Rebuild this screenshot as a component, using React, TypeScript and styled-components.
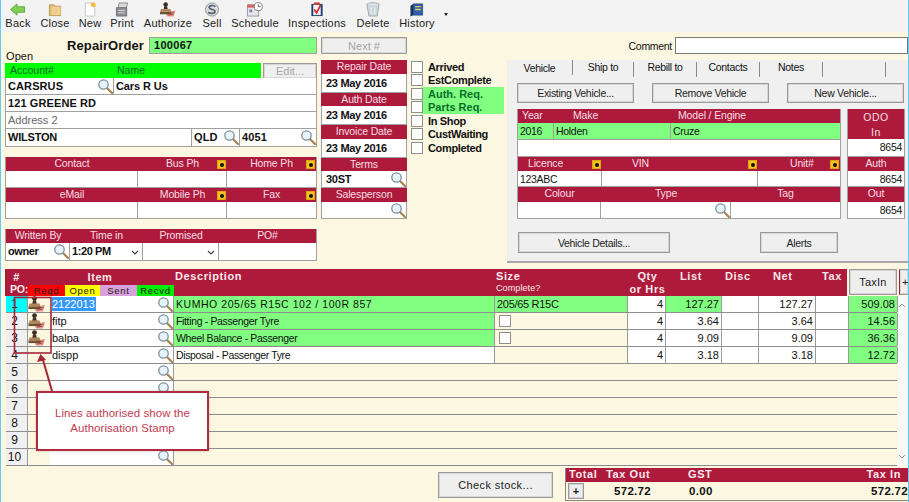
import React from 'react';
import styled, { createGlobalStyle } from 'styled-components';

const CRIMSON = '#ae1a3c';
const GREEN = '#80ff80';
const CREAM = '#fbf7e1';
const LINE = '#a0a0a0';
const UI = '"Liberation Sans", Arial, sans-serif';

const Global = createGlobalStyle`
  html, body { margin: 0; padding: 0; width: 909px; height: 502px; overflow: hidden; background: ${CREAM}; }
  * { box-sizing: border-box; }
`;

const Page = styled.div`
  position: relative; width: 909px; height: 502px; overflow: hidden;
  display: flex; flex-direction: column;
  background: ${CREAM}; border-left: 1px solid #5fcdf0; border-right: 1px solid #5fcdf0;
  font: 11px ${UI}; color: #111;
`;

/* ---------- toolbar ---------- */
const Toolbar = styled.div`display: flex; height: 32px; background: #f3f3f3; flex: none;`;
const ToolItem = styled.div<{ $w: number }>`
  width: ${p => p.$w}px; display: flex; flex-direction: column; align-items: center;
  padding-top: 2px; color: #222; letter-spacing: .2px; line-height: 13px;
  svg { display: block; height: 15px; width: 18px; }
`;
const Caret = styled.div`
  margin: 13px 0 0 5px; width: 0; height: 0;
  border-left: 2.5px solid transparent; border-right: 2.5px solid transparent; border-top: 3px solid #222;
`;

/* ---------- top form ---------- */
const Top = styled.div`
  display: grid; grid-template-columns: 312px 90px 100px 401px; padding: 5px 0 0 4px; height: 231px; flex: none;
`;
const Col = styled.div<{ $ml?: number }>`display: flex; flex-direction: column; margin-left: ${p => p.$ml ?? 0}px; min-width: 0;`;
const RepairRow = styled.div`display: flex; justify-content: flex-end; align-items: center; height: 17px; gap: 5px;`;
const RepairLabel = styled.span`font: bold 13px ${UI}; letter-spacing: .1px;`;
const OrderBox = styled.div`
  width: 168px; height: 17px; background: ${GREEN}; border: 1px solid ${LINE};
  font: bold 11px/15px ${UI}; padding-left: 4px; letter-spacing: .3px;
`;
const StatusText = styled.div`height: 12px; margin: -4px 0 1px 1px; line-height: 12px; letter-spacing: .1px;`;
const AccountHead = styled.div`display: flex; height: 15px; justify-content: space-between;`;
const AccountBar = styled.div`
  width: 256px; background: #00ff00; display: flex; font-size: 10.5px; line-height: 15px; color: #063;
  span:first-child { width: 112px; padding-left: 5px; }
`;
const Btn = styled.div<{ $w?: number; $h?: number; $off?: boolean; $ls?: number }>`
  width: ${p => (p.$w ? p.$w + 'px' : 'auto')}; height: ${p => p.$h ?? 20}px;
  background: #efefef; border: 1px solid #9a9a9a; box-shadow: inset 0 0 0 1px #d6d6d6;
  display: flex; align-items: center; justify-content: center; flex: none;
  color: ${p => (p.$off ? '#a5a5a5' : '#222')}; letter-spacing: ${p => p.$ls ?? 0}px; font-size: 11px;
`;
const PanelBtn = styled(Btn)`font-size: 10.5px; letter-spacing: -.3px;`;
const Frame = styled.div`border-left: 1px solid ${LINE}; border-right: 1px solid ${LINE};`;
const FieldRow = styled.div<{ $h?: number }>`
  display: flex; height: ${p => p.$h ?? 17}px; border-bottom: 1px solid ${LINE}; background: #fff;
`;
const Field = styled.div<{ $w?: number; $bg?: string; $bold?: boolean; $right?: boolean; $grey?: boolean; $last?: boolean; $track?: number }>`
  position: relative; flex: ${p => (p.$w ? `0 0 ${p.$w}px` : '1 1 0')}; min-width: 0;
  background: ${p => p.$bg ?? '#fff'}; border-right: ${p => (p.$last ? '0' : `1px solid ${LINE}`)};
  padding: 0 2px; line-height: 17px; white-space: nowrap; overflow: hidden;
  font-weight: ${p => (p.$bold ? 700 : 400)};
  letter-spacing: ${p => (p.$track !== undefined ? p.$track + 'px' : p.$bold ? '.1px' : 'inherit')};
  text-align: ${p => (p.$right ? 'right' : 'left')};
  color: ${p => (p.$grey ? '#666' : '#111')};
`;
const BandRow = styled.div<{ $h?: number }>`
  display: flex; height: ${p => p.$h ?? 14}px; background: ${CRIMSON}; color: #f6dfe4;
  font-size: 10.5px; letter-spacing: -.15px;
`;
const BandCell = styled.div<{ $w?: number; $pad?: number }>`
  position: relative; flex: ${p => (p.$w ? `0 0 ${p.$w}px` : '1 1 0')};
  text-align: ${p => (p.$pad !== undefined ? 'left' : 'center')}; padding-left: ${p => p.$pad ?? 0}px;
  line-height: 13px; white-space: nowrap;
`;
const Flag = styled.i`
  position: absolute; right: 1px; top: 3px; width: 9px; height: 9px; background: #f5c21b; border: 1px solid #d8a718;
  &::after { content: ''; position: absolute; left: 1.5px; top: 1.5px; width: 4px; height: 4px; background: #111; border-radius: 50%; }
`;
const Gap = styled.div<{ $h: number }>`height: ${p => p.$h}px; flex: none;`;
const Lens = styled.svg`position: absolute; right: 0; top: 0; width: 16px; height: 16px;`;
const Search = () => (
  <Lens viewBox="0 0 16 16">
    <line x1="10" y1="10" x2="15" y2="15" stroke="#a8834f" strokeWidth="2.2" strokeLinecap="round" />
    <circle cx="6.5" cy="6.5" r="4.7" fill="#e6f3fb" stroke="#7d8f9a" strokeWidth="1.3" />
  </Lens>
);

const DateBand = styled(BandRow)`justify-content: center; line-height: 13px;`;
const DateField = styled.div<{ $h: number }>`
  position: relative; height: ${p => p.$h}px; background: #fff; border: 1px solid ${LINE}; border-top: 0;
  font: bold 11px/${p => p.$h - 1}px ${UI}; padding-left: 4px; letter-spacing: -.3px;
  white-space: nowrap;
`;

const CheckList = styled.div`margin-top: 23px; width: 94px; display: flex; flex-direction: column;`;
const CheckRow = styled.div<{ $on?: boolean }>`
  display: flex; align-items: center; height: 13.5px; gap: 5px; padding-left: 1px;
  background: ${p => (p.$on ? 'linear-gradient(90deg, transparent 11px, ' + GREEN + ' 11px)' : 'transparent')};
  font-weight: 700; color: ${p => (p.$on ? '#0a6b2c' : '#111')}; letter-spacing: ${p => (p.$on ? '0' : '-.35px')}; white-space: nowrap;
`;
const Check = styled.i`
  display: block; width: 12px; height: 12px; background: #fff; border: 1px solid #8f8f8f; flex: none;
`;

/* ---------- vehicle panel ---------- */
const CommentRow = styled.div`display: flex; justify-content: flex-end; align-items: center; height: 17px; gap: 3px; font-size: 10.5px; letter-spacing: -.3px;`;
const CommentBox = styled.div`width: 233px; height: 17px; background: #fff; border: 1px solid #777;`;
const Panel = styled.div`
  margin-top: 6px; height: 203px; background: #f0f0f0; border-bottom: 2px solid #a8a8a8; padding-left: 10px;
  display: flex; flex-direction: column; font-size: 10.5px; letter-spacing: -.3px;
`;
const Tabs = styled.div`display: flex; height: 23px; margin-left: -10px;`;
const Tab = styled.div<{ $w: number; $on?: boolean }>`
  width: ${p => p.$w}px; height: 15px; margin-top: ${p => (p.$on ? 0 : 2)}px; text-align: center;
  border-right: 1px solid #888; line-height: ${p => (p.$on ? 16 : 11)}px;
`;
const PanelButtons = styled.div`display: flex; gap: 18px; height: 20px; flex: none;`;
const VehicleSplit = styled.div`display: flex; gap: 6px; margin-top: 6px;`;
const VehicleTable = styled.div`width: 324px; flex: none;`;
const OdoCol = styled.div`width: 58px; flex: none;`;
const OdoHead = styled.div`
  height: 30px; background: ${CRIMSON}; color: #f6dfe4; text-align: center; line-height: 15px; letter-spacing: .5px; padding-top: 1px;
`;
const PanelFooter = styled.div`display: flex; gap: 90px; margin: 13px 0 0 1px;`;

/* ---------- line grid ---------- */
const COLS = '22px 22px 124px 321px 133px 38px 56px 37px 57px 33px 49px';
const GridWrap = styled.div`margin: 6px 0 0 4px; position: relative; flex: none;`;
const HeadRow = styled.div`display: flex; height: 27px;`;
const Head = styled.div`
  width: 842px; background: ${CRIMSON}; color: #f8e8eb; font-weight: 700; letter-spacing: .6px;
  display: grid; grid-template-columns: 169px 321px 133px 38px 56px 37px 57px 33px; line-height: 13px;
`;
const HeadLeft = styled.div`display: flex; flex-direction: column;`;
const HeadLine = styled.div<{ $h: number }>`display: flex; height: ${p => p.$h}px; align-items: center;`;
const Hash = styled.span`width: 23px; text-align: center;`;
const ItemTitle = styled.span`flex: 1; text-align: center; padding-right: 2px;`;
const PoLabel = styled.span`width: 23px; padding-left: 5px; margin-top: -2px; white-space: nowrap; letter-spacing: -.2px; font-size: 10.5px;`;
const Chips = styled.div`display: flex; height: 11px; flex: 1;`;
const Chip = styled.span<{ $bg: string; $w: number }>`
  width: ${p => p.$w}px; background: ${p => p.$bg}; color: #222; font: 400 9.5px/11px ${UI};
  text-align: center; letter-spacing: .7px;
`;
const HeadCell = styled.div<{ $pad?: number; $center?: boolean }>`
  padding: 1px 0 0 ${p => p.$pad ?? 1}px; text-align: ${p => (p.$center ? 'center' : 'left')};
`;
const SubHead = styled.div`font: 400 9px/10px ${UI}; letter-spacing: .1px;`;
const TaxInBtn = styled(Btn)`margin-left: 2px; height: 26px;`;
const PlusTop = styled(Btn)`margin-left: 2px; height: 26px; border-left-color: ${CRIMSON}; width: 10px; overflow: hidden; justify-content: flex-start; padding-left: 2px;`;
const BodyWrap = styled.div`display: flex;`;
const Rows = styled.div`margin-left: 1px; width: 892px;`;
const Row = styled.div`
  display: grid; grid-template-columns: ${COLS}; height: 17px;
  border-bottom: 1px solid #8d8d8d;
`;
const Cell = styled.div<{ $bg?: string; $right?: boolean; $span?: number; $tight?: boolean }>`
  position: relative; background: ${p => p.$bg ?? '#fff'}; border-right: ${p => (p.$span ? '0' : '1px solid #9a9a9a')};
  line-height: 16px; padding: 0 2px; white-space: nowrap; overflow: hidden; color: #111;
  text-align: ${p => (p.$right ? 'right' : 'left')};
  grid-column: ${p => (p.$span ? `span ${p.$span}` : 'auto')};
`;
const DescCell = styled(Cell)<{ $caps?: boolean }>`
  font-size: 10.5px; letter-spacing: ${p => (p.$caps ? '.55px' : '-.35px')};
`;
const SizeCell = styled(Cell)`letter-spacing: -.3px;`;
const NumCell = styled(Cell)`text-align: center; padding-left: 0; padding-right: 4px; font-size: 12px;`;
const StampCell = styled(Cell)`border-right: 0; padding: 0; overflow: visible;`;
const Selected = styled.span`background: #3399ff; color: #fff; display: inline-block; height: 14px; line-height: 14px; padding: 0 1px 0 0; margin-top: 1px; vertical-align: top;`;
const SmallCheck = styled(Check)`margin-top: 2px; margin-left: 2px;`;
const ScrollBar = styled.div`
  width: 10px; flex: none; margin-left: -1px; height: 170px; background: #f8f8f8; display: flex; flex-direction: column;
  justify-content: space-between; align-items: center; padding: 6px 0;
  svg { width: 8px; height: 6px; display: block; }
`;

/* ---------- footer ---------- */
const Footer = styled.div`display: flex; justify-content: flex-end; margin-top: 2px;`;
const CheckStock = styled(Btn)`margin: 4px 12px 0 0; letter-spacing: .4px;`;
const Totals = styled.div`width: 343px; height: 33px; border: 1px solid #888; border-right: 0; border-top: 0; background: ${CREAM};`;
const TotalHead = styled.div`
  height: 14px; background: ${CRIMSON}; color: #f8e8eb; font-weight: 700; letter-spacing: .6px; line-height: 13px;
  display: grid; grid-template-columns: 37px 82px 40px 1fr; padding: 0 7px 0 3px;
`;
const TotalVals = styled.div`
  height: 18px; display: grid; grid-template-columns: 46px 75px 40px 1fr; padding: 0 0 0 2px; align-items: center;
  font-weight: 700; font-size: 11.5px; letter-spacing: .3px; color: #111;
`;
const MiniPlus = styled(Btn)`width: 16px; height: 16px; font-size: 11px;`;
const RightNum = styled.span`text-align: right;`;

/* ---------- annotation ---------- */
const MarkerLayer = styled.svg`position: absolute; left: 0; top: 0; width: 908px; height: 502px; pointer-events: none;`;
const Callout = styled.div`
  position: absolute; left: 35px; top: 391px; width: 173px; height: 60px; background: #fff;
  border: 2px solid #b02a40; box-shadow: 0 0 2px rgba(120,40,50,.35);
  color: #c23a52; font-size: 11.5px; line-height: 14.5px; letter-spacing: .05px; text-align: center; padding-top: 13px;
`;

/* ---------- icons ---------- */
const Stamp = ({ size = 18 }: { size?: number }) => (
  <svg viewBox="0 0 18 16" width={size} height={size * 16 / 18} style={{ display: 'block' }}>
    <path d="M6 11 L17 9 L15 15.5 L8 15.5 Z" fill="#e0928f" />
    <path d="M9 12.4 L15.5 11.4 M9 14 L14.5 13.2" stroke="#b5423c" strokeWidth=".9" />
    <circle cx="6.5" cy="2.6" r="2.4" fill="#3b2c24" />
    <path d="M5 4.5 h3 l.8 3.5 h-4.6z" fill="#3f3026" />
    <path d="M1.5 7.5 h10 l1 3 h-12z" fill="#b28656" />
    <path d="M.5 10.5 h12 v2.6 h-12z" fill="#6d5136" />
  </svg>
);
const icons: Record<string, React.ReactNode> = {
  Back: <svg viewBox="0 0 18 16"><path d="M1 8 L8 2 V5 H16 V11 H8 V14 Z" fill="#7cd04f" stroke="#4f9a35" strokeWidth=".8" /></svg>,
  Close: <svg viewBox="0 0 18 16"><path d="M3 3 h5 l1 1.5 h6 v10 h-12z" fill="#e4bd72" stroke="#a98748" strokeWidth=".8" /><path d="M5 5 h10 v9 h-10z" fill="#efcf8d" /></svg>,
  New: <svg viewBox="0 0 18 16"><path d="M4 1 h7 l3 3 v11 h-10z" fill="#fff" stroke="#b5b5b5" strokeWidth=".8" /><circle cx="12.5" cy="3" r="2.6" fill="#f6b93b" /></svg>,
  Print: <svg viewBox="0 0 18 16"><path d="M6 1 h9 l-2 8 h-9z" fill="#d9d9d9" stroke="#666" strokeWidth=".7" /><path d="M3 6 h11 v9 h-11z" fill="#8d8f92" stroke="#555" strokeWidth=".7" /><path d="M5 9 h7 M5 11.5 h7" stroke="#dcdcdc" strokeWidth="1" /></svg>,
  Authorize: <Stamp size={18} />,
  Sell: <svg viewBox="0 0 18 16"><circle cx="9" cy="8" r="7" fill="#d8dce0" stroke="#8e9499" /><path d="M12.5 5 C11 3 5.5 3.5 6 6 C6.5 8.5 12.5 7.5 12.2 10.2 C12 12.6 6.5 12.8 5 10.8" fill="none" stroke="#58616a" strokeWidth="1.8" /></svg>,
  Schedule: <svg viewBox="0 0 18 16"><rect x="1" y="3" width="12" height="12" fill="#e7e3ea" stroke="#8e7f9b" strokeWidth=".8" /><rect x="1" y="3" width="12" height="3" fill="#d9615a" /><path d="M3 8 h3 v3 h-3z" fill="#6f86b8" /><circle cx="12.5" cy="5" r="4.3" fill="#fff" stroke="#777" /><path d="M12.5 2.5 V5 H15" stroke="#444" fill="none" strokeWidth=".8" /></svg>,
  Inspections: <svg viewBox="0 0 18 16"><path d="M3 2 h12 v13 h-12z" fill="#1c3f73" /><path d="M5 3 h8 v11 h-8z" fill="#f1f1f1" /><path d="M6 8 L8.5 11.5 L13 3" fill="none" stroke="#d7262e" strokeWidth="1.8" /><rect x="6" y="0.5" width="6" height="2.5" fill="#c93a34" /></svg>,
  Delete: <svg viewBox="0 0 18 16"><ellipse cx="9" cy="2.7" rx="6.6" ry="2" fill="#dfe6ea" stroke="#8c979e" strokeWidth=".8" /><path d="M2.6 3 L4.6 15 H13.4 L15.4 3" fill="#cdd7dc" stroke="#8c979e" strokeWidth=".8" /><path d="M7 6 v7 M11 6 v7" stroke="#f3f6f7" /></svg>,
  History: <svg viewBox="0 0 18 16"><path d="M5 2 h10 v12 h-10z" fill="#2e5fae" stroke="#1d3d75" strokeWidth=".7" /><path d="M2 4 L5 2 V14 L2 15.5z" fill="#16345f" /><path d="M7 5 h6 M7 8 h6" stroke="#f2c84b" strokeWidth="1.4" /></svg>,
};
const tools: [string, number][] = [
  ['Back', 34], ['Close', 40], ['New', 30], ['Print', 34], ['Authorize', 58], ['Sell', 30],
  ['Schedule', 56], ['Inspections', 68], ['Delete', 44], ['History', 44],
];

const lines = [
  { n: 1, item: '2122013', desc: 'KUMHO 205/65 R15C 102 / 100R 857', size: '205/65 R15C', list: '127.27', tax: '509.08', green: true, sizeGreen: true, stamp: true, caps: true },
  { n: 2, item: 'fitp', desc: 'Fitting - Passenger Tyre', check: true, list: '3.64', tax: '14.56', green: true, stamp: true },
  { n: 3, item: 'balpa', desc: 'Wheel Balance - Passenger', check: true, list: '9.09', tax: '36.36', green: true, stamp: true },
  { n: 4, item: 'dispp', desc: 'Disposal - Passenger Tyre', list: '3.18', tax: '12.72', green: false },
];

const ChevronSvg = styled.svg`position: absolute; right: 3px; top: 7px; width: 8px; height: 6px;`;
function Chevron() {
  return <ChevronSvg viewBox="0 0 8 6"><path d="M1 1 L4 4 L7 1" fill="none" stroke="#444" strokeWidth="1.2" /></ChevronSvg>;
}

export default function App() {
  return (
    <Page>
      <Global />
      <Toolbar>
        {tools.map(([t, w]) => <ToolItem key={t} $w={w}>{icons[t]}{t}</ToolItem>)}
        <Caret />
      </Toolbar>

      <Top>
        <Col>
          <RepairRow><RepairLabel>RepairOrder</RepairLabel><OrderBox>100067</OrderBox></RepairRow>
          <StatusText>Open</StatusText>
          <AccountHead>
            <AccountBar><span>Account#</span><span>Name</span></AccountBar>
            <Btn $w={54} $h={16} $off>Edit...</Btn>
          </AccountHead>
          <Frame>
            <FieldRow>
              <Field $w={108} $bold>CARSRUS<Search /></Field>
              <Field $bold $last $track={-.1}>Cars R Us</Field>
            </FieldRow>
            <FieldRow><Field $bold $last>121 GREENE RD</Field></FieldRow>
            <FieldRow><Field $last $grey>Address 2</Field></FieldRow>
            <FieldRow $h={18}>
              <Field $w={186} $bold $track={-.2}>WILSTON</Field>
              <Field $w={48} $bold>QLD<Search /></Field>
              <Field $bold $last>4051<Search /></Field>
            </FieldRow>
          </Frame>
          <Gap $h={10} />
          <Frame>
            <BandRow><BandCell $w={132}>Contact</BandCell><BandCell $w={89}>Bus Ph<Flag /></BandCell><BandCell>Home Ph<Flag /></BandCell></BandRow>
            <FieldRow><Field $w={132} /><Field $w={89} /><Field $last /></FieldRow>
            <BandRow><BandCell $w={132}>eMail</BandCell><BandCell $w={89}>Mobile Ph<Flag /></BandCell><BandCell>Fax<Flag /></BandCell></BandRow>
            <FieldRow><Field $w={132} /><Field $w={89} /><Field $last /></FieldRow>
          </Frame>
          <Gap $h={10} />
          <Frame>
            <BandRow><BandCell $w={64}>Written By</BandCell><BandCell $w={73}>Time in</BandCell><BandCell $w={76}>Promised</BandCell><BandCell>PO#</BandCell></BandRow>
            <FieldRow $h={18}>
              <Field $w={64} $bold $track={-.4}>owner<Search /></Field>
              <Field $w={73} $bold $track={-.4}>1:20 PM<Chevron /></Field>
              <Field $w={76}><Chevron /></Field>
              <Field $last />
            </FieldRow>
          </Frame>
        </Col>

        <Col $ml={4}>
          <Btn $w={86} $h={17} $off>Next #</Btn>
          <Gap $h={6} />
          <DateBand>Repair Date</DateBand>
          <DateField $h={19}>23 May 2016</DateField>
          <DateBand $h={13}>Auth Date</DateBand>
          <DateField $h={19}>23 May 2016</DateField>
          <DateBand>Invoice Date</DateBand>
          <DateField $h={19}>23 May 2016</DateField>
          <DateBand $h={13}>Terms</DateBand>
          <DateField $h={17}>30ST<Search /></DateField>
          <DateBand>Salesperson</DateBand>
          <DateField $h={17}><Search /></DateField>
        </Col>

        <Col $ml={3}>
          <CheckList>
            <CheckRow><Check />Arrived</CheckRow>
            <CheckRow><Check />EstComplete</CheckRow>
            <CheckRow $on><Check />Auth. Req.</CheckRow>
            <CheckRow $on><Check />Parts Req.</CheckRow>
            <CheckRow><Check />In Shop</CheckRow>
            <CheckRow><Check />CustWaiting</CheckRow>
            <CheckRow><Check />Completed</CheckRow>
          </CheckList>
        </Col>

        <Col>
          <CommentRow>Comment<CommentBox /></CommentRow>
          <Panel>
            <Tabs>
              <Tab $w={66} $on>Vehicle</Tab><Tab $w={61}>Ship to</Tab><Tab $w={63}>Rebill to</Tab>
              <Tab $w={63}>Contacts</Tab><Tab $w={63}>Notes</Tab><Tab $w={63} />
            </Tabs>
            <PanelButtons>
              <PanelBtn $w={117}>Existing Vehicle...</PanelBtn>
              <PanelBtn $w={117}>Remove Vehicle</PanelBtn>
              <PanelBtn $w={117}>New Vehicle...</PanelBtn>
            </PanelButtons>
            <VehicleSplit>
              <VehicleTable>
                <Frame>
                  <BandRow><BandCell $w={36} $pad={4}>Year</BandCell><BandCell $w={117} $pad={19}>Make</BandCell><BandCell $pad={7}>Model / Engine</BandCell></BandRow>
                  <FieldRow><Field $w={36} $bg={GREEN}>2016</Field><Field $w={117} $bg={GREEN}>Holden</Field><Field $bg={GREEN} $last>Cruze</Field></FieldRow>
                  <FieldRow><Field $last /></FieldRow>
                  <BandRow><BandCell $w={84} $pad={10}>Licence<Flag /></BandCell><BandCell $w={156} $pad={30}>VIN<Flag /></BandCell><BandCell $pad={32}>Unit#<Flag /></BandCell></BandRow>
                  <FieldRow $h={16}><Field $w={84}>123ABC</Field><Field $w={156} /><Field $last /></FieldRow>
                  <BandRow $h={15}><BandCell $w={83}>Colour</BandCell><BandCell $w={130}>Type</BandCell><BandCell>Tag</BandCell></BandRow>
                  <FieldRow><Field $w={83} /><Field $w={130}><Search /></Field><Field $last /></FieldRow>
                </Frame>
              </VehicleTable>
              <OdoCol>
                <Frame>
                  <OdoHead>ODO<br />In</OdoHead>
                  <FieldRow $h={18}><Field $right $last>8654</Field></FieldRow>
                  <BandRow><BandCell>Auth</BandCell></BandRow>
                  <FieldRow $h={16}><Field $right $last>8654</Field></FieldRow>
                  <BandRow $h={15}><BandCell>Out</BandCell></BandRow>
                  <FieldRow><Field $right $last>8654</Field></FieldRow>
                </Frame>
              </OdoCol>
            </VehicleSplit>
            <PanelFooter>
              <PanelBtn $w={152} $h={21}>Vehicle Details...</PanelBtn>
              <PanelBtn $w={78} $h={21}>Alerts</PanelBtn>
            </PanelFooter>
          </Panel>
        </Col>
      </Top>

      <GridWrap>
        <HeadRow>
          <Head>
            <HeadLeft>
              <HeadLine $h={16}><Hash>#</Hash><ItemTitle>Item</ItemTitle></HeadLine>
              <HeadLine $h={11}>
                <PoLabel>PO:</PoLabel>
                <Chips>
                  <Chip $bg="#ff0000" $w={37}>Reqd</Chip>
                  <Chip $bg="#ffff00" $w={35}>Open</Chip>
                  <Chip $bg="#d8a0dc" $w={37}>Sent</Chip>
                  <Chip $bg="#00ee00" $w={37}>Recvd</Chip>
                </Chips>
              </HeadLine>
            </HeadLeft>
            <HeadCell>Description</HeadCell>
            <HeadCell>Size<SubHead>Complete?</SubHead></HeadCell>
            <HeadCell $center>Qty<br />or Hrs</HeadCell>
            <HeadCell $pad={14}>List</HeadCell>
            <HeadCell $pad={3}>Disc</HeadCell>
            <HeadCell $pad={14}>Net</HeadCell>
            <HeadCell $pad={6}>Tax</HeadCell>
          </Head>
          <TaxInBtn $w={48} $ls={.2}>TaxIn</TaxInBtn>
          <PlusTop>+</PlusTop>
        </HeadRow>
        <BodyWrap>
          <Rows>
            {lines.map(l => (
              <Row key={l.n}>
                <NumCell $bg={l.n === 1 ? '#00ffff' : '#f0f0f0'}>{l.n}</NumCell>
                <StampCell $bg={CREAM}>{l.stamp && <Stamp size={18} />}</StampCell>
                <Cell>{l.n === 1 ? <Selected>{l.item}</Selected> : l.item}<Search /></Cell>
                <DescCell $bg={l.green ? GREEN : '#fff'} $caps={l.caps}>{l.desc}</DescCell>
                <SizeCell $bg={l.sizeGreen ? GREEN : CREAM}>{l.size}{l.check && <SmallCheck />}</SizeCell>
                <Cell $right>4</Cell>
                <Cell $right $bg={l.n === 1 ? GREEN : '#fff'}>{l.list}</Cell>
                <Cell />
                <Cell $right>{l.list}</Cell>
                <Cell />
                <Cell $right $bg={GREEN}>{l.tax}</Cell>
              </Row>
            ))}
            {[5, 6, 7, 8, 9, 10].map(n => (
              <Row key={n}>
                <NumCell $bg="#f0f0f0">{n}</NumCell>
                <StampCell $bg={CREAM} />
                <Cell><Search /></Cell>
                <Cell $bg={CREAM} $span={8} />
              </Row>
            ))}
          </Rows>
          <ScrollBar>
            <svg viewBox="0 0 8 6"><path d="M1 5 L4 2 L7 5" fill="none" stroke="#999" /></svg>
            <svg viewBox="0 0 8 6"><path d="M1 1 L4 4 L7 1" fill="none" stroke="#999" /></svg>
          </ScrollBar>
        </BodyWrap>
      </GridWrap>

      <Footer>
        <CheckStock $w={115} $h={26}>Check stock...</CheckStock>
        <Totals>
          <TotalHead><span>Total</span><span>Tax Out</span><span>GST</span><RightNum>Tax In</RightNum></TotalHead>
          <TotalVals><MiniPlus>+</MiniPlus><span>572.72</span><span>0.00</span><RightNum>572.72</RightNum></TotalVals>
        </Totals>
      </Footer>

      <MarkerLayer viewBox="0 0 908 502">
        <rect x="13.5" y="297.5" width="36.5" height="55.5" fill="none" stroke="#a5263a" strokeWidth="1.6" />
        <path d="M51 391 L42 360" stroke="#a5263a" strokeWidth="2" />
        <path d="M39.5 354 L36 362 L45 360 Z" fill="#a5263a" />
      </MarkerLayer>
      <Callout>Lines authorised show the<br />Authorisation Stamp</Callout>
    </Page>
  );
}
